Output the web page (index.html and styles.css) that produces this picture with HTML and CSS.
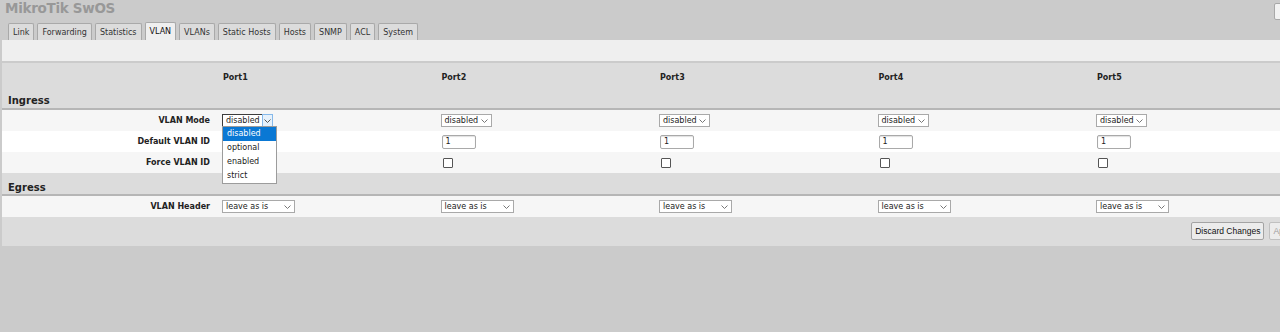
FILE: index.html
```html
<!DOCTYPE html>
<html lang="en">
<head>
    <meta charset="UTF-8">
    <meta name="viewport" content="width=device-width, initial-scale=1.0">
    <link rel="stylesheet" href="styles.css">
    <title>MikroTik SwOS</title>
</head>
<body>
    <div class="page">
        <div class="header">
            <div class="brand">MikroTik SwOS</div>
            <button class="logout">Logout</button>
        </div>
        <div class="tabs">
            <a class="tab">Link</a>
            <a class="tab">Forwarding</a>
            <a class="tab">Statistics</a>
            <a class="tab active">VLAN</a>
            <a class="tab">VLANs</a>
            <a class="tab">Static Hosts</a>
            <a class="tab">Hosts</a>
            <a class="tab">SNMP</a>
            <a class="tab">ACL</a>
            <a class="tab">System</a>
        </div>
        <div class="toolbar"></div>
        <div class="panel">
            <table class="vlan-table">
                <colgroup>
                    <col class="label-col">
                    <col class="port-col">
                    <col class="port-col">
                    <col class="port-col">
                    <col class="port-col">
                    <col class="port-col">
                </colgroup>
                <tr class="ports">
                    <th></th>
                    <th>Port1</th>
                    <th>Port2</th>
                    <th>Port3</th>
                    <th>Port4</th>
                    <th>Port5</th>
                </tr>
                <tr class="section">
                    <th colspan="6">Ingress</th>
                </tr>
                <tr class="row odd">
                    <th>VLAN Mode</th>
                    <td>
                        <div class="dropdown">
                            <span class="select open short">
                                <span class="value">disabled</span>
                                <span class="arrow"><svg width="7" height="4" viewBox="0 0 7 4"><path d="M0.5 0.5 L3.5 3.5 L6.5 0.5" fill="none" stroke="#555" stroke-width="1"/></svg></span>
                            </span>
                            <ul class="options">
                                <li class="selected">disabled</li>
                                <li>optional</li>
                                <li>enabled</li>
                                <li>strict</li>
                            </ul>
                        </div>
                    </td>
                    <td><span class="select short"><span class="value">disabled</span><svg width="7" height="4" viewBox="0 0 7 4"><path d="M0.5 0.5 L3.5 3.5 L6.5 0.5" fill="none" stroke="#777" stroke-width="1"/></svg></span></td>
                    <td><span class="select short"><span class="value">disabled</span><svg width="7" height="4" viewBox="0 0 7 4"><path d="M0.5 0.5 L3.5 3.5 L6.5 0.5" fill="none" stroke="#777" stroke-width="1"/></svg></span></td>
                    <td><span class="select short"><span class="value">disabled</span><svg width="7" height="4" viewBox="0 0 7 4"><path d="M0.5 0.5 L3.5 3.5 L6.5 0.5" fill="none" stroke="#777" stroke-width="1"/></svg></span></td>
                    <td><span class="select short"><span class="value">disabled</span><svg width="7" height="4" viewBox="0 0 7 4"><path d="M0.5 0.5 L3.5 3.5 L6.5 0.5" fill="none" stroke="#777" stroke-width="1"/></svg></span></td>
                </tr>
                <tr class="row even">
                    <th>Default VLAN ID</th>
                    <td><span class="textbox">1</span></td>
                    <td><span class="textbox">1</span></td>
                    <td><span class="textbox">1</span></td>
                    <td><span class="textbox">1</span></td>
                    <td><span class="textbox">1</span></td>
                </tr>
                <tr class="row odd">
                    <th>Force VLAN ID</th>
                    <td><span class="checkbox"></span></td>
                    <td><span class="checkbox"></span></td>
                    <td><span class="checkbox"></span></td>
                    <td><span class="checkbox"></span></td>
                    <td><span class="checkbox"></span></td>
                </tr>
                <tr class="section egress">
                    <th colspan="6">Egress</th>
                </tr>
                <tr class="row odd">
                    <th>VLAN Header</th>
                    <td><span class="select long"><span class="value">leave as is</span><svg width="7" height="4" viewBox="0 0 7 4"><path d="M0.5 0.5 L3.5 3.5 L6.5 0.5" fill="none" stroke="#777" stroke-width="1"/></svg></span></td>
                    <td><span class="select long"><span class="value">leave as is</span><svg width="7" height="4" viewBox="0 0 7 4"><path d="M0.5 0.5 L3.5 3.5 L6.5 0.5" fill="none" stroke="#777" stroke-width="1"/></svg></span></td>
                    <td><span class="select long"><span class="value">leave as is</span><svg width="7" height="4" viewBox="0 0 7 4"><path d="M0.5 0.5 L3.5 3.5 L6.5 0.5" fill="none" stroke="#777" stroke-width="1"/></svg></span></td>
                    <td><span class="select long"><span class="value">leave as is</span><svg width="7" height="4" viewBox="0 0 7 4"><path d="M0.5 0.5 L3.5 3.5 L6.5 0.5" fill="none" stroke="#777" stroke-width="1"/></svg></span></td>
                    <td><span class="select long"><span class="value">leave as is</span><svg width="7" height="4" viewBox="0 0 7 4"><path d="M0.5 0.5 L3.5 3.5 L6.5 0.5" fill="none" stroke="#777" stroke-width="1"/></svg></span></td>
                </tr>
            </table>
            <div class="actions">
                <button class="btn">Discard Changes</button>
                <button class="btn disabled">Apply All</button>
            </div>
        </div>
    </div>
</body>
</html>
```

FILE: styles.css
```css
html, body {
    margin: 0px;
    padding: 0px;
    overflow: hidden;
}

body {
    background-color: #cbcbcb;
    font-family: "DejaVu Sans", Verdana, sans-serif;
    font-size: 8px;
    color: #222;
}

.page {
    width: 1316px;
    padding-left: 2px;
    box-sizing: border-box;
}

.header {
    display: flex;
    justify-content: space-between;
    align-items: flex-start;
    height: 22px;
}

.brand {
    margin: 0 0 0 3px;
    font-size: 13.5px;
    font-weight: bold;
    line-height: 16px;
    color: #989898;
    letter-spacing: -0.3px;
}

.logout {
    margin: 3px 4px 0 0;
    height: 17px;
    padding: 0 6px;
    border: 1px solid #a8a8a8;
    border-radius: 2px;
    background-color: #f2f2f2;
    font-family: "Liberation Sans", Arial, sans-serif;
    font-size: 8px;
}

.tabs {
    display: flex;
    align-items: flex-end;
    gap: 3px;
    height: 18px;
    padding-left: 6px;
}

.tab {
    display: flex;
    align-items: center;
    height: 16px;
    padding: 0 4px;
    border: 1px solid #a9a9a9;
    border-bottom: none;
    border-radius: 2px 2px 0 0;
    background-color: #dcdcdc;
    color: #333;
}

.tab.active {
    height: 17px;
    background-color: #efefef;
    color: #111;
}

.toolbar {
    height: 21px;
    background-color: #efefef;
    margin-bottom: 2px;
}

.panel {
    background-color: #dcdcdc;
}

.vlan-table {
    border-collapse: collapse;
    table-layout: fixed;
    width: 1312px;
}

.label-col {
    width: 220px;
}

.port-col {
    width: 218.5px;
}

.vlan-table th,
.vlan-table td {
    padding: 0px;
}

.ports th {
    height: 21px;
    padding: 4px 0 0 1px;
    text-align: left;
    font-weight: bold;
}

.section th {
    height: 18px;
    text-align: left;
    vertical-align: bottom;
    padding: 0 0 2px 6px;
    font-size: 10px;
    font-weight: bold;
    border-bottom: 2px solid #b6b6b6;
}

.section.egress th {
    height: 20px;
    padding-bottom: 1px;
}

.row th,
.row td {
    height: 21px;
    vertical-align: middle;
}

.row th {
    text-align: right;
    padding-right: 12px;
    font-weight: bold;
}

.row.odd {
    background-color: #f6f6f6;
}

.row.even {
    background-color: #ffffff;
}

.select {
    display: inline-flex;
    align-items: center;
    justify-content: space-between;
    box-sizing: border-box;
    height: 13px;
    padding: 0 3px 0 3px;
    border: 1px solid #a9a9a9;
    background-color: #fff;
    vertical-align: middle;
    line-height: 11px;
}

.select.short {
    width: 51px;
}

.select.long {
    width: 73px;
}

.select.open {
    padding-right: 0px;
    border-color: #3c3c3c;
}

.select .arrow {
    display: flex;
    align-items: center;
    justify-content: center;
    width: 9px;
    height: 11px;
    border: 1px solid #86b9ea;
    margin-right: -1px;
    background-color: #e6f1fb;
}

.dropdown {
    position: relative;
    display: inline-block;
    vertical-align: middle;
}

.options {
    position: absolute;
    z-index: 5;
    top: 12px;
    left: 0px;
    width: 55px;
    margin: 0px;
    padding: 0px;
    list-style: none;
    box-sizing: border-box;
    border: 1px solid #9c9c9c;
    background-color: #fff;
}

.options li {
    height: 14px;
    line-height: 14px;
    padding-left: 4px;
    color: #222;
}

.options li.selected {
    background-color: #0a78d4;
    color: #fff;
}

.textbox {
    display: inline-block;
    box-sizing: border-box;
    width: 34px;
    height: 14px;
    padding-left: 3px;
    margin-left: 1px;
    border: 1px solid #a9a9a9;
    border-radius: 2px;
    box-shadow: inset 0 1px 1px #e0e0e0;
    background-color: #fff;
    line-height: 12px;
    vertical-align: middle;
}

.checkbox {
    display: inline-block;
    box-sizing: border-box;
    width: 10px;
    height: 10px;
    margin-left: 2px;
    border: 1px solid #555;
    border-radius: 1px;
    background-color: #fff;
    vertical-align: middle;
}

.actions {
    display: flex;
    justify-content: flex-end;
    gap: 5px;
    height: 29px;
    padding: 5px 6px 0 0;
    box-sizing: border-box;
}

.btn {
    height: 18px;
    padding: 0 3px;
    border: 1px solid #a3a3a3;
    border-radius: 2px;
    background-color: #ececec;
    font-family: "Liberation Sans", Arial, sans-serif;
    font-size: 8.5px;
    color: #111;
}

.btn.disabled {
    color: #a0a0a0;
    border-color: #c0c0c0;
}
```
